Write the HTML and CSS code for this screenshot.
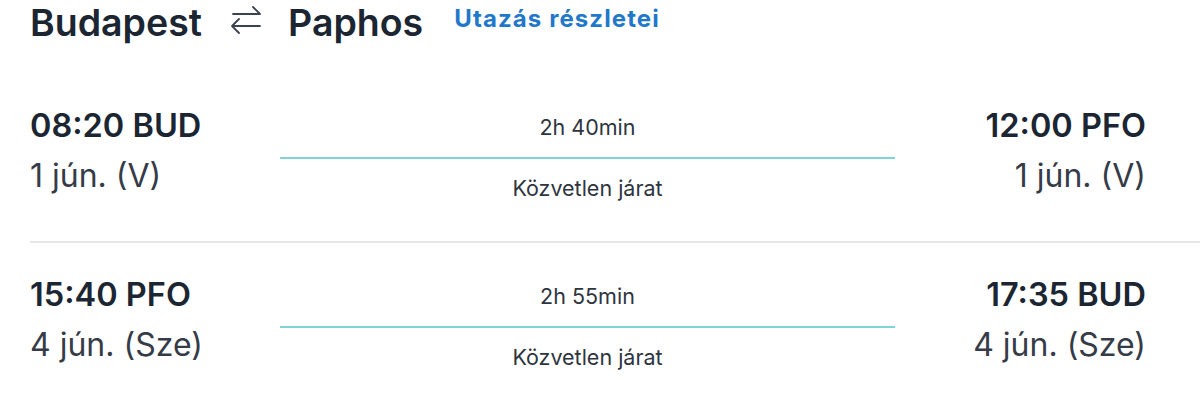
FILE: index.html
```html
<!DOCTYPE html>
<html lang="hu">
<head>
<meta charset="utf-8">
<link rel="stylesheet" href="styles.css">
</head>
<body>
<div class="page">
  <div class="header">
    <span class="city">Budapest</span>
    <svg class="swap" width="34" height="30" viewBox="0 0 34 30" fill="none" stroke="#3b4250" stroke-width="1.8" stroke-linecap="round" stroke-linejoin="round">
      <path d="M4 10 H31 M24 3 L31 10"/>
      <path d="M31 22 H3 M10 15 L3 22 L10 29"/>
    </svg>
    <span class="city">Paphos</span>
    <span class="details">Utazás részletei</span>
  </div>
  <div class="legs">
    <div class="leg">
      <div class="end">
        <div class="time">08:20 BUD</div>
        <div class="date">1 jún. (V)</div>
      </div>
      <div class="mid">
        <div class="dur">2h 40min</div>
        <div class="line"></div>
        <div class="type">Közvetlen járat</div>
      </div>
      <div class="end right">
        <div class="time">12:00 PFO</div>
        <div class="date">1 jún. (V)</div>
      </div>
    </div>
    <div class="leg second">
      <div class="end">
        <div class="time">15:40 PFO</div>
        <div class="date">4 jún. (Sze)</div>
      </div>
      <div class="mid">
        <div class="dur">2h 55min</div>
        <div class="line"></div>
        <div class="type">Közvetlen járat</div>
      </div>
      <div class="end right">
        <div class="time">17:35 BUD</div>
        <div class="date">4 jún. (Sze)</div>
      </div>
    </div>
  </div>
</div>
</body>
</html>
```

FILE: styles.css
```css
html, body {
  margin: 0;
  padding: 0;
  background: #ffffff;
}
body {
  font-family: Inter, "Noto Sans", "Liberation Sans", sans-serif;
  color: #1c2633;
}
.page {
  padding-left: 30px;
}
.header {
  display: flex;
  align-items: center;
  height: 44px;
}
.city {
  font-size: 37.5px;
  font-weight: 600;
  color: #1c2633;
}
.swap {
  margin: 0 25px 0 27px;
  position: relative;
  top: -3px;
}
.details {
  margin-left: 31px;
  font-size: 24px;
  font-weight: 700;
  letter-spacing: 1.1px;
  color: #1f78c9;
  position: relative;
  top: -4px;
}
.legs {
  margin-top: 62px;
}
.leg {
  display: grid;
  grid-template-columns: 250px 615px 251px;
  align-items: start;
  padding-bottom: 39px;
}
.leg.second {
  border-top: 2px solid #e6e6e6;
  padding-top: 32px;
}
.end {
  display: flex;
  flex-direction: column;
}
.end.right {
  align-items: flex-end;
}
.time {
  font-size: 32.5px;
  font-weight: 600;
  line-height: 40px;
  color: #1c2633;
}
.date {
  font-size: 32px;
  font-weight: 400;
  line-height: 40px;
  margin-top: 10px;
  color: #353c48;
}
.mid {
  display: flex;
  flex-direction: column;
  align-items: center;
  padding-top: 7px;
}
.dur, .type {
  font-size: 21.5px;
  line-height: 28px;
  color: #2e3540;
}
.line {
  align-self: stretch;
  height: 2px;
  background: #7fd4d8;
  margin: 16px 0 15px;
}
```
